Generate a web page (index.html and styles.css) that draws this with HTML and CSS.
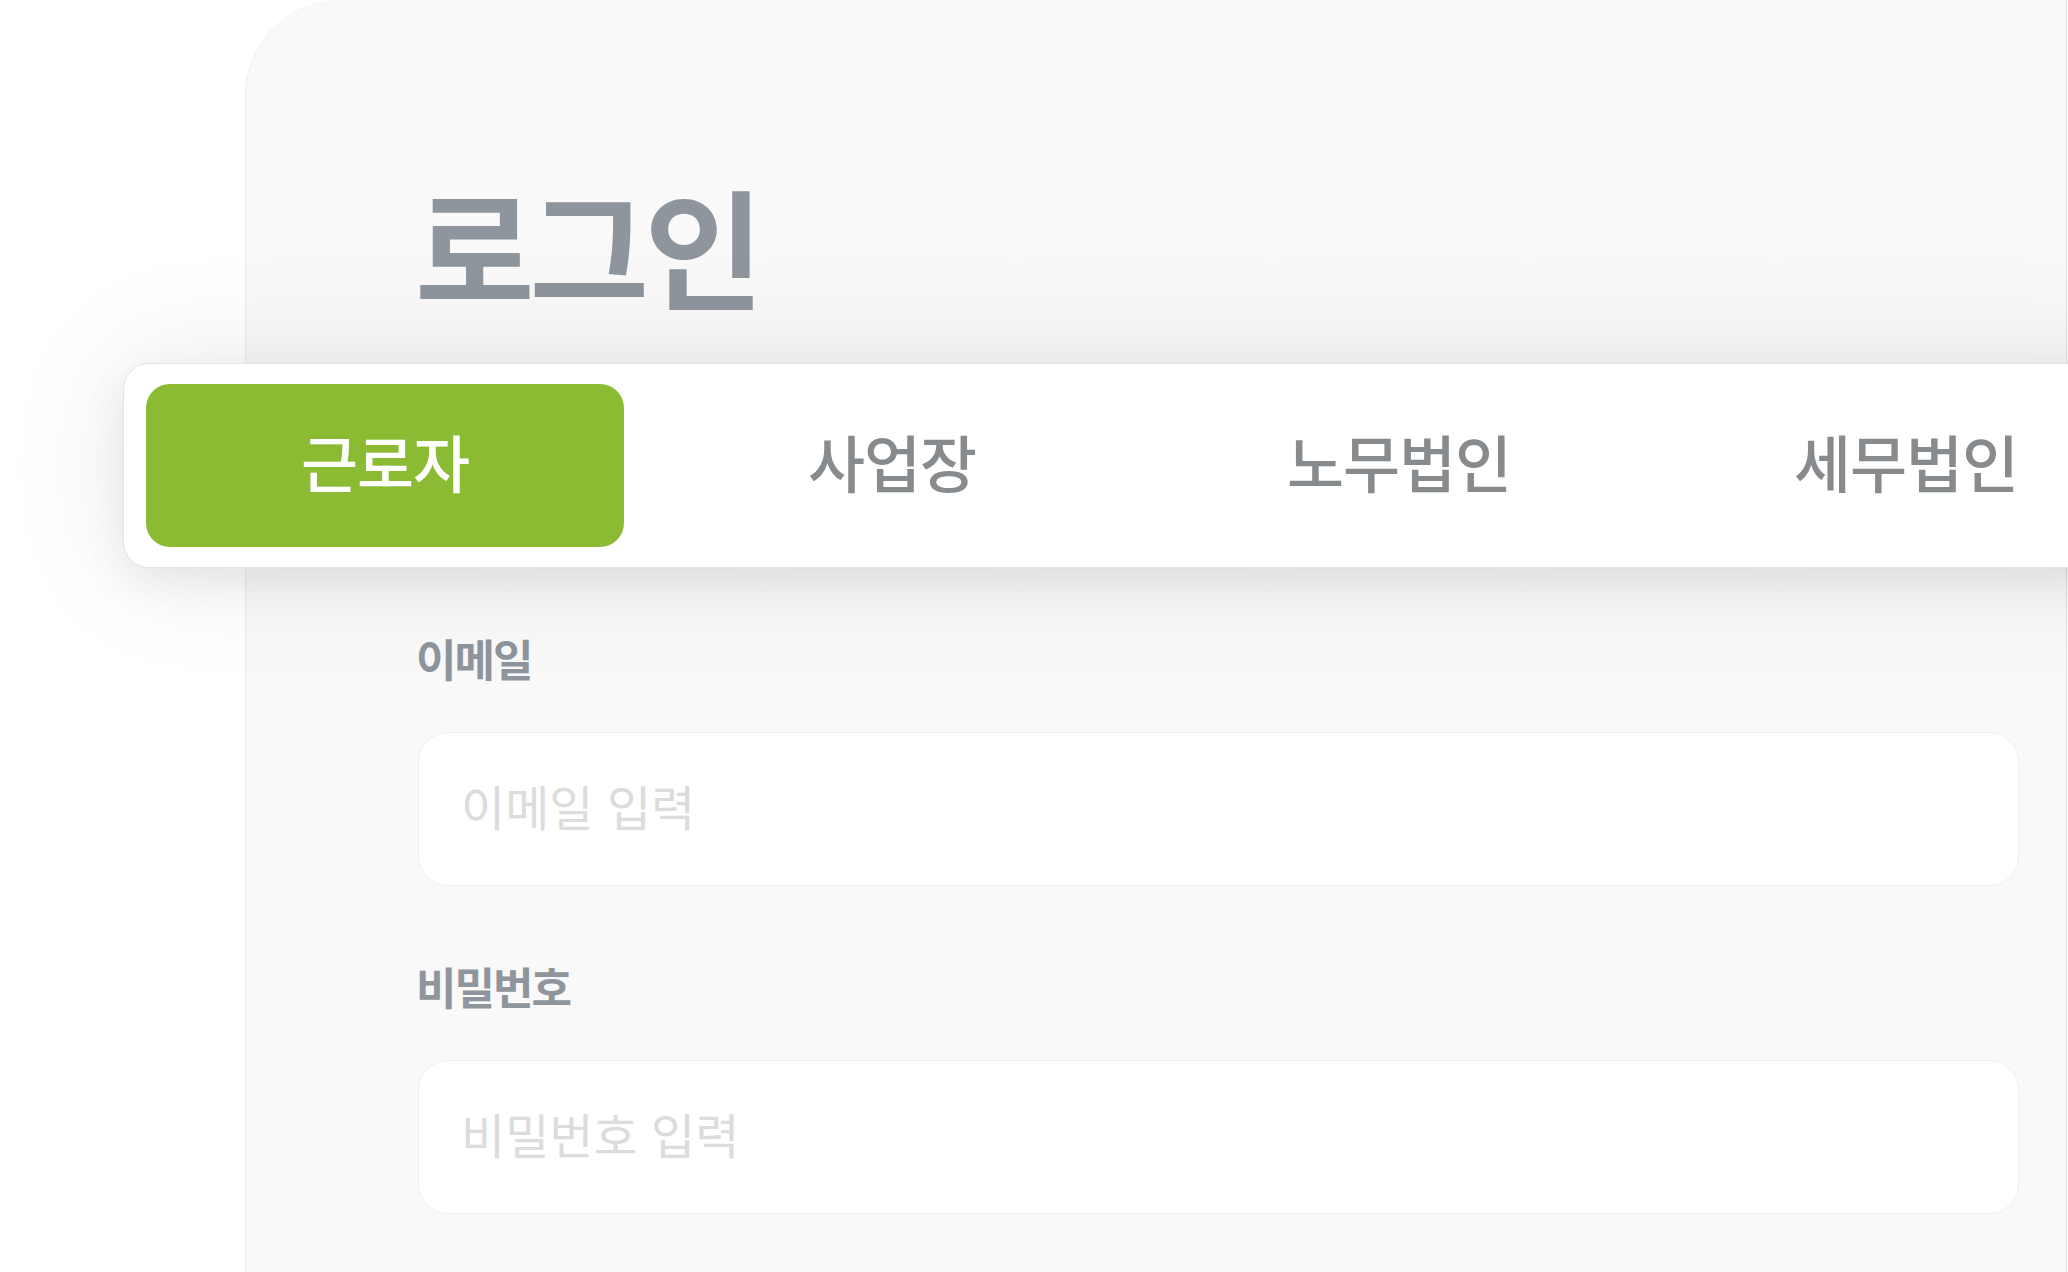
FILE: index.html
```html
<!DOCTYPE html>
<html lang="ko">
<head>
<meta charset="utf-8">
<title>로그인</title>
<link rel="stylesheet" href="styles.css">
</head>
<body>
<main class="card">
  <h1 class="title">로그인</h1>
  <nav class="tabs">
    <button class="tab active">근로자</button>
    <button class="tab">사업장</button>
    <button class="tab">노무법인</button>
    <button class="tab">세무법인</button>
  </nav>
  <form class="form">
    <label class="label" for="email">이메일</label>
    <input class="input" id="email" type="text" placeholder="이메일 입력">
    <label class="label label-pw" for="pw">비밀번호</label>
    <input class="input" id="pw" type="password" placeholder="비밀번호 입력">
  </form>
</main>
</body>
</html>
```

FILE: styles.css
```css
html, body {
  margin: 0;
  padding: 0;
  overflow: hidden;
  background: #ffffff;
  height: 1272px;
}

body {
  font-family: "Noto Sans CJK KR", "Noto Sans", sans-serif;
}

.card {
  margin-left: 245px;
  width: 1822px;
  height: 1272px;
  box-sizing: border-box;
  background: #f9f9f9;
  border: 1px solid #ececec;
  border-right: 1px solid #e2e2e2;
  border-bottom: none;
  border-top: none;
  border-radius: 96px 0 0 0;
  padding: 178px 48px 0 172px;
}

.title {
  margin: 0 0 0 -3px;
  font-size: 130px;
  line-height: 130px;
  font-weight: 700;
  letter-spacing: -5px;
  color: #8f959d;
}

.tabs {
  position: relative;
  z-index: 2;
  display: flex;
  gap: 29px;
  width: max-content;
  margin: 55px 0 0 -295px;
  padding: 20px 22px;
  background: #ffffff;
  border: 1px solid #e4e4e4;
  border-radius: 26px;
  box-shadow: 0 14px 44px rgba(0, 0, 0, 0.07), 0 0 130px rgba(0, 0, 0, 0.09);
}

.tab {
  flex: 0 0 478px;
  height: 163px;
  border: none;
  border-radius: 24px;
  background: transparent;
  font-family: inherit;
  font-size: 62px;
  font-weight: 500;
  letter-spacing: -1px;
  color: #888b8e;
  padding: 0 0 10px 0;
}

.tab.active {
  background: #8bba33;
  color: #ffffff;
}

.form {
  display: flex;
  flex-direction: column;
  align-items: flex-start;
}

.label {
  margin: 68px 0 0 -2px;
  font-size: 44px;
  line-height: 44px;
  font-weight: 700;
  letter-spacing: -2px;
  color: #8f959d;
}

.label-pw {
  margin-top: 78px;
}

.input {
  margin-top: 52px;
  width: 1601px;
  height: 154px;
  box-sizing: border-box;
  background: #ffffff;
  border: 1px solid #efefef;
  border-radius: 30px;
  padding: 0 0 8px 42px;
  font-family: inherit;
  font-size: 48px;
  letter-spacing: 0;
  color: #555;
  outline: none;
}

.input::placeholder {
  color: #dcdcdc;
}
```
